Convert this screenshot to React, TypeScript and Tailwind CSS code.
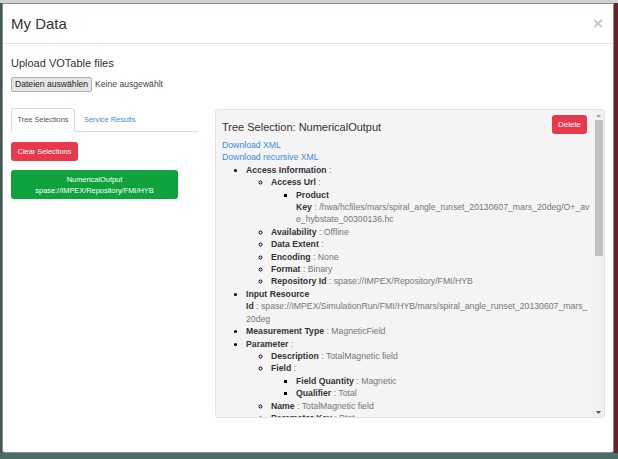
import React from "react";

const Label = ({ children }: { children: React.ReactNode }) => (
  <span className="font-bold text-[#333]">{children}</span>
);
const Val = ({ children }: { children: React.ReactNode }) => (
  <span className="text-[#777]">{children}</span>
);

export default function App() {
  return (
    <div className="w-[618px] h-[459px] overflow-hidden bg-[#4d6b67] flex flex-col font-['Liberation_Sans',Arial,sans-serif]">
      <div className="h-[3px] bg-[#cfd2d1] shrink-0" />
      <div className="flex flex-row h-[450px] shrink-0">
        <div className="w-[2px] bg-[#3f5a55]" />
        <div className="w-[612px] h-[450px] bg-white border border-[#8a8f8e] rounded-b-[3px] flex flex-col overflow-hidden">
          {/* header */}
          <div className="h-[40px] shrink-0 border-b border-[#e5e5e5] pl-[8px] pr-[10px] flex items-center justify-between">
            <span className="text-[15px] leading-[18px] text-[#333]">My Data</span>
            <span className="text-[17px] leading-[18px] font-bold text-[#c8c8c8]">×</span>
          </div>
          {/* body */}
          <div className="pl-[8px] pt-[12px] flex flex-col">
            <div className="text-[11px] leading-[14px] text-[#333]">Upload VOTable files</div>
            <div className="mt-[7px] flex flex-row items-center gap-[3px]">
              <div className="h-[15px] px-[3px] bg-[#e6e6e6] border border-[#adadad] rounded-[2px] text-[8.6px] leading-[13px] text-[#222]">
                Dateien auswählen
              </div>
              <span className="text-[8.6px] leading-[13px] text-[#444]">Keine ausgewählt</span>
            </div>
            <div className="mt-[17px] flex flex-row">
              {/* left column */}
              <div className="w-[187px] flex flex-col">
                <div className="flex flex-row items-end border-b border-[#ddd] h-[23px]">
                  <div className="w-[64px] h-[24px] -mb-px bg-white border border-[#ddd] border-b-white rounded-t-[3px] flex items-center justify-center text-[7.4px] text-[#555]">
                    Tree Selections
                  </div>
                  <div className="ml-[9px] h-[23px] flex items-center text-[7.4px] text-[#428bca]">
                    Service Results
                  </div>
                </div>
                <div className="mt-[10px] w-[67px] h-[19px] bg-[#e8394c] rounded-[3px] flex items-center justify-center text-[7.4px] text-white">
                  Clear Selections
                </div>
                <div className="mt-[9px] w-[167px] h-[29px] bg-[#0fa23d] rounded-[3px] flex flex-col items-center justify-center text-[7.4px] leading-[11px] text-white">
                  <span>NumericalOutput</span>
                  <span>spase://IMPEX/Repository/FMI/HYB</span>
                </div>
              </div>
              {/* right panel */}
              <div className="ml-[17px] w-[390px] h-[309px] bg-[#f4f4f4] border border-[#e3e3e3] rounded-[3px] flex flex-row overflow-hidden">
                <div className="flex-1 overflow-hidden pl-[6px] pr-[6px] pt-[5px]">
                  <div className="flex flex-row justify-between items-start">
                    <span className="mt-[6px] text-[11px] leading-[13px] text-[#333]">Tree Selection: NumericalOutput</span>
                    <div className="w-[35px] h-[19px] bg-[#e8394c] rounded-[3px] flex items-center justify-center text-[8px] text-white">
                      Delete
                    </div>
                  </div>
                  <div className="mt-[5px] text-[8.7px] leading-[12.4px] whitespace-nowrap">
                    <div className="text-[#3a8ede]">Download XML</div>
                    <div className="text-[#3a8ede]">Download recursive XML</div>
                    <ul className="list-disc pl-[24px]">
                      <li>
                        <Label>Access Information</Label> <Val>:</Val>
                        <ul className="list-[circle] pl-[25px]">
                          <li>
                            <Label>Access Url</Label> <Val>:</Val>
                            <ul className="list-[square] pl-[25px]">
                              <li>
                                <Label>Product</Label>
                                <br />
                                <Label>Key</Label> <Val>: /hwa/hcfiles/mars/spiral_angle_runset_20130607_mars_20deg/O+_av</Val>
                                <br />
                                <Val>e_hybstate_00300136.hc</Val>
                              </li>
                            </ul>
                          </li>
                          <li>
                            <Label>Availability</Label> <Val>: Offline</Val>
                          </li>
                          <li>
                            <Label>Data Extent</Label> <Val>:</Val>
                          </li>
                          <li>
                            <Label>Encoding</Label> <Val>: None</Val>
                          </li>
                          <li>
                            <Label>Format</Label> <Val>: Binary</Val>
                          </li>
                          <li>
                            <Label>Repository Id</Label> <Val>: spase://IMPEX/Repository/FMI/HYB</Val>
                          </li>
                        </ul>
                      </li>
                      <li>
                        <Label>Input Resource</Label>
                        <br />
                        <Label>Id</Label> <Val>: spase://IMPEX/SimulationRun/FMI/HYB/mars/spiral_angle_runset_20130607_mars_</Val>
                        <br />
                        <Val>20deg</Val>
                      </li>
                      <li>
                        <Label>Measurement Type</Label> <Val>: MagneticField</Val>
                      </li>
                      <li>
                        <Label>Parameter</Label> <Val>:</Val>
                        <ul className="list-[circle] pl-[25px]">
                          <li>
                            <Label>Description</Label> <Val>: TotalMagnetic field</Val>
                          </li>
                          <li>
                            <Label>Field</Label> <Val>:</Val>
                            <ul className="list-[square] pl-[25px]">
                              <li>
                                <Label>Field Quantity</Label> <Val>: Magnetic</Val>
                              </li>
                              <li>
                                <Label>Qualifier</Label> <Val>: Total</Val>
                              </li>
                            </ul>
                          </li>
                          <li>
                            <Label>Name</Label> <Val>: TotalMagnetic field</Val>
                          </li>
                          <li>
                            <Label>Parameter Key</Label> <Val>: Ptot</Val>
                          </li>
                        </ul>
                      </li>
                    </ul>
                  </div>
                </div>
                {/* scrollbar */}
                <div className="w-[11px] bg-[#f1f1f1] flex flex-col items-center">
                  <div className="h-[10px] flex items-center justify-center">
                    <svg width="5" height="3" viewBox="0 0 5 3"><path d="M2.5 0 L5 3 L0 3 Z" fill="#a3a3a3" /></svg>
                  </div>
                  <div className="w-[8px] h-[136px] bg-[#c1c1c1]" />
                  <div className="flex-1" />
                  <div className="h-[10px] flex items-center justify-center">
                    <svg width="5" height="3" viewBox="0 0 5 3"><path d="M0 0 L5 0 L2.5 3 Z" fill="#505050" /></svg>
                  </div>
                </div>
              </div>
            </div>
          </div>
        </div>
        <div className="w-[4px] bg-[#6e1e24]" />
      </div>
    </div>
  );
}
